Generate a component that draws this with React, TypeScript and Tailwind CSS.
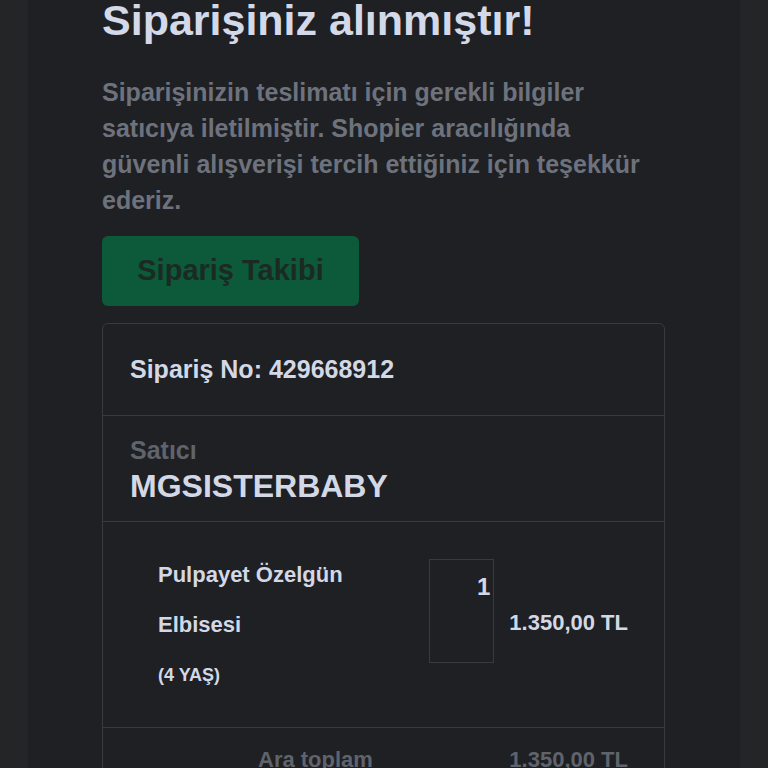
import React from 'react';

const font = { fontFamily: '"Liberation Sans", Arial, sans-serif' };

const App: React.FC = () => {
  return (
    <div className="h-screen bg-[#242527] flex justify-center px-[28px] overflow-hidden" style={font}>
      <div className="w-[712px] bg-[#1f2023] px-[74px] pb-10">
        {/* Heading */}
        <h1 className="-mt-[8px] text-[43px] leading-[56px] font-bold text-[#d3d9e8] whitespace-nowrap">
          Siparişiniz alınmıştır!
        </h1>

        {/* Description */}
        <p className="mt-[26px] max-w-[563px] text-[25px] leading-[36px] font-bold text-[#6d727d]">
          Siparişinizin teslimatı için gerekli bilgiler
          <br />
          satıcıya iletilmiştir. Shopier aracılığında
          <br />
          güvenli alışverişi tercih ettiğiniz için teşekkür
          <br />
          ederiz.
        </p>

        {/* Button */}
        <button className="mt-[18px] w-[257px] h-[70px] rounded-md bg-[#0c5a3a] text-[29px] font-bold text-[#1b2a22] flex items-center justify-center">
          Sipariş Takibi
        </button>

        {/* Order card */}
        <div className="mt-[17px] w-[563px] rounded-md border border-[#393a3e]">
          <div className="h-[92px] flex items-center px-[27px] border-b border-[#393a3e]">
            <span className="text-[25px] font-bold text-[#d3d8e6]">Sipariş No: 429668912</span>
          </div>

          <div className="h-[106px] px-[27px] pt-[19px] border-b border-[#393a3e]">
            <div className="text-[25px] leading-[30px] font-bold text-[#5f636c]">Satıcı</div>
            <div className="mt-[1px] text-[32px] leading-[40px] font-bold text-[#d3d8e6]">MGSISTERBABY</div>
          </div>

          <div className="h-[206px] pl-[55px] pr-[36px] pt-[37px] border-b border-[#393a3e] flex items-start">
            <div className="w-[273px] text-[22px] leading-[50px] font-bold text-[#d3d8e6] whitespace-nowrap">
              <div className="-mt-[9px]">Pulpayet Özelgün</div>
              <div>Elbisesi</div>
              <div className="text-[18px]">(4 YAŞ)</div>
            </div>
            <div className="w-[66px] h-[104px] border border-[#393a3e] text-right pr-[3px] pt-[12px] text-[24px] leading-[30px] font-bold text-[#d3d8e6]">
              1
            </div>
            <div className="ml-[15px] mt-[49px] text-[22px] leading-[30px] font-bold text-[#d3d8e6] whitespace-nowrap">
              1.350,00 TL
            </div>
          </div>

          <div className="h-[80px] pt-[17px] pr-[36px] flex">
            <div className="ml-[155px] w-[253px] text-[22px] leading-[30px] font-bold text-[#5f636c]">Ara toplam</div>
            <div className="text-[22px] leading-[30px] font-bold text-[#5f636c] whitespace-nowrap">1.350,00 TL</div>
          </div>
        </div>
      </div>
    </div>
  );
};

export default App;
